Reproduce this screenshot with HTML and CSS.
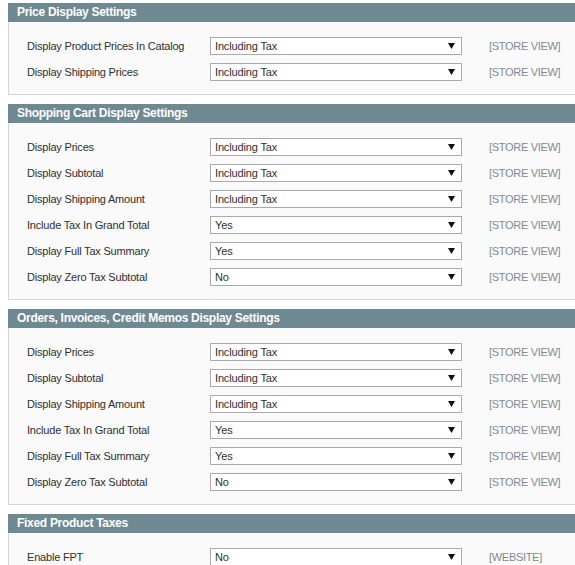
FILE: index.html
```html
<!DOCTYPE html>
<html>
<head>
<meta charset="utf-8">
<link rel="stylesheet" href="styles.css">
</head>
<body>
<div class="page">

<section class="section">
  <h3 class="section-head">Price Display Settings</h3>
  <div class="section-body">
    <div class="row"><span class="label">Display Product Prices In Catalog</span><div class="select"><span class="value">Including Tax</span><svg class="arrow" width="7" height="6" viewBox="0 0 7 6"><path d="M0 0H7L3.5 6Z"/></svg></div><span class="scope">[STORE VIEW]</span></div>
    <div class="row"><span class="label">Display Shipping Prices</span><div class="select"><span class="value">Including Tax</span><svg class="arrow" width="7" height="6" viewBox="0 0 7 6"><path d="M0 0H7L3.5 6Z"/></svg></div><span class="scope">[STORE VIEW]</span></div>
  </div>
</section>

<section class="section">
  <h3 class="section-head">Shopping Cart Display Settings</h3>
  <div class="section-body">
    <div class="row"><span class="label">Display Prices</span><div class="select"><span class="value">Including Tax</span><svg class="arrow" width="7" height="6" viewBox="0 0 7 6"><path d="M0 0H7L3.5 6Z"/></svg></div><span class="scope">[STORE VIEW]</span></div>
    <div class="row"><span class="label">Display Subtotal</span><div class="select"><span class="value">Including Tax</span><svg class="arrow" width="7" height="6" viewBox="0 0 7 6"><path d="M0 0H7L3.5 6Z"/></svg></div><span class="scope">[STORE VIEW]</span></div>
    <div class="row"><span class="label">Display Shipping Amount</span><div class="select"><span class="value">Including Tax</span><svg class="arrow" width="7" height="6" viewBox="0 0 7 6"><path d="M0 0H7L3.5 6Z"/></svg></div><span class="scope">[STORE VIEW]</span></div>
    <div class="row"><span class="label">Include Tax In Grand Total</span><div class="select"><span class="value">Yes</span><svg class="arrow" width="7" height="6" viewBox="0 0 7 6"><path d="M0 0H7L3.5 6Z"/></svg></div><span class="scope">[STORE VIEW]</span></div>
    <div class="row"><span class="label">Display Full Tax Summary</span><div class="select"><span class="value">Yes</span><svg class="arrow" width="7" height="6" viewBox="0 0 7 6"><path d="M0 0H7L3.5 6Z"/></svg></div><span class="scope">[STORE VIEW]</span></div>
    <div class="row"><span class="label">Display Zero Tax Subtotal</span><div class="select"><span class="value">No</span><svg class="arrow" width="7" height="6" viewBox="0 0 7 6"><path d="M0 0H7L3.5 6Z"/></svg></div><span class="scope">[STORE VIEW]</span></div>
  </div>
</section>

<section class="section">
  <h3 class="section-head">Orders, Invoices, Credit Memos Display Settings</h3>
  <div class="section-body">
    <div class="row"><span class="label">Display Prices</span><div class="select"><span class="value">Including Tax</span><svg class="arrow" width="7" height="6" viewBox="0 0 7 6"><path d="M0 0H7L3.5 6Z"/></svg></div><span class="scope">[STORE VIEW]</span></div>
    <div class="row"><span class="label">Display Subtotal</span><div class="select"><span class="value">Including Tax</span><svg class="arrow" width="7" height="6" viewBox="0 0 7 6"><path d="M0 0H7L3.5 6Z"/></svg></div><span class="scope">[STORE VIEW]</span></div>
    <div class="row"><span class="label">Display Shipping Amount</span><div class="select"><span class="value">Including Tax</span><svg class="arrow" width="7" height="6" viewBox="0 0 7 6"><path d="M0 0H7L3.5 6Z"/></svg></div><span class="scope">[STORE VIEW]</span></div>
    <div class="row"><span class="label">Include Tax In Grand Total</span><div class="select"><span class="value">Yes</span><svg class="arrow" width="7" height="6" viewBox="0 0 7 6"><path d="M0 0H7L3.5 6Z"/></svg></div><span class="scope">[STORE VIEW]</span></div>
    <div class="row"><span class="label">Display Full Tax Summary</span><div class="select"><span class="value">Yes</span><svg class="arrow" width="7" height="6" viewBox="0 0 7 6"><path d="M0 0H7L3.5 6Z"/></svg></div><span class="scope">[STORE VIEW]</span></div>
    <div class="row"><span class="label">Display Zero Tax Subtotal</span><div class="select"><span class="value">No</span><svg class="arrow" width="7" height="6" viewBox="0 0 7 6"><path d="M0 0H7L3.5 6Z"/></svg></div><span class="scope">[STORE VIEW]</span></div>
  </div>
</section>

<section class="section">
  <h3 class="section-head">Fixed Product Taxes</h3>
  <div class="section-body">
    <div class="row"><span class="label">Enable FPT</span><div class="select"><span class="value">No</span><svg class="arrow" width="7" height="6" viewBox="0 0 7 6"><path d="M0 0H7L3.5 6Z"/></svg></div><span class="scope">[WEBSITE]</span></div>
  </div>
</section>

</div>
</body>
</html>
```

FILE: styles.css
```css
html, body {
  margin: 0;
  padding: 0;
  background: #ffffff;
  overflow: hidden;
}
body {
  font-family: "Liberation Sans", Arial, sans-serif;
  font-size: 11px;
  color: #2f2f2f;
}
.page {
  padding: 3px 0 0 8px;
  width: 620px;
}
.section {
  margin-bottom: 9px;
}
.section-head {
  margin: 0;
  height: 19px;
  line-height: 19px;
  padding-left: 9px;
  background: #6f8992;
  color: #ffffff;
  font-size: 12px;
  font-weight: bold;
  letter-spacing: -0.3px;
}
.section-body {
  background: #fafafa;
  border: 1px solid #d6d6d6;
  border-top: 0;
  padding: 11px 0 9px 18px;
}
.row {
  display: flex;
  align-items: center;
  height: 26px;
}
.label {
  width: 183px;
  flex: none;
  letter-spacing: -0.2px;
}
.select {
  flex: none;
  box-sizing: border-box;
  width: 252px;
  height: 18px;
  background: #ffffff;
  border: 1px solid #aaaaaa;
  display: flex;
  align-items: center;
  justify-content: space-between;
  padding: 0 6px 0 4px;
}
.value {
  color: #2f2f2f;
  letter-spacing: -0.15px;
}
.arrow {
  fill: #111111;
}
.scope {
  margin-left: 27px;
  font-size: 11px;
  letter-spacing: -0.3px;
  color: #838a8f;
}
```
